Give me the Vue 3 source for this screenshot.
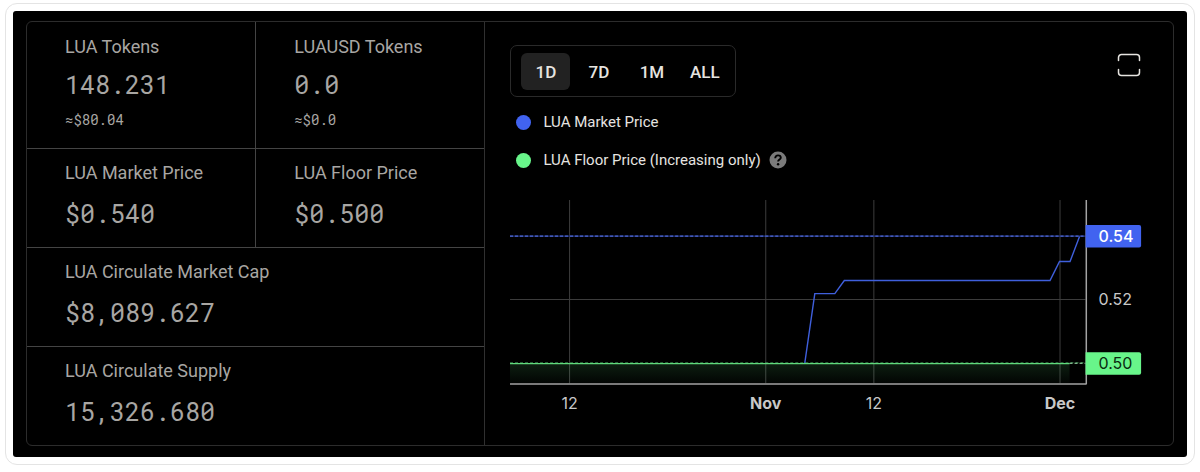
<script setup>
import { ref } from 'vue'

const stats = [
  { label: 'LUA Tokens', value: '148.231', note: '≈$80.04' },
  { label: 'LUAUSD Tokens', value: '0.0', note: '≈$0.0' },
  { label: 'LUA Market Price', value: '$0.540' },
  { label: 'LUA Floor Price', value: '$0.500' },
  { label: 'LUA Circulate Market Cap', value: '$8,089.627', wide: true },
  { label: 'LUA Circulate Supply', value: '15,326.680', wide: true },
]

const ranges = ['1D', '7D', '1M', 'ALL']
const activeRange = ref('1D')

const ticks = [
  { x: 59.5, label: '12' },
  { x: 255.5, label: 'Nov', bold: true },
  { x: 363.5, label: '12' },
  { x: 549.5, label: 'Dec', bold: true },
]
</script>

<template>
  <main class="frame">
    <div class="screen">
      <div class="panel">
        <dl class="stats">
          <div v-for="s in stats" :key="s.label" class="stat" :class="{ wide: s.wide, noted: s.note }">
            <dt>{{ s.label }}</dt>
            <dd class="value">{{ s.value }}</dd>
            <dd v-if="s.note" class="note">{{ s.note }}</dd>
          </div>
        </dl>

        <section class="market">
          <header class="toolbar">
            <div class="ranges" role="group" aria-label="Range">
              <button
                v-for="r in ranges"
                :key="r"
                type="button"
                :class="{ active: r === activeRange }"
                :aria-pressed="r === activeRange"
                @click="activeRange = r"
              >{{ r }}</button>
            </div>
            <button type="button" class="expand" aria-label="Full screen">
              <svg width="24" height="24" viewBox="0 0 24 24" fill="none" stroke="#e6e4e0" stroke-width="1.5" stroke-linecap="round">
                <path d="M1.5 7.5V4.5a3 3 0 0 1 3-3h15a3 3 0 0 1 3 3v3" />
                <path d="M1.5 16.5v3a3 3 0 0 0 3 3h15a3 3 0 0 0 3-3v-3" />
              </svg>
            </button>
          </header>

          <ul class="legend">
            <li><span class="dot blue"></span>LUA Market Price</li>
            <li>
              <span class="dot green"></span>LUA Floor Price (Increasing only)
              <button type="button" class="help" aria-label="About the floor price">
                <svg width="18" height="18" viewBox="0 0 18 18">
                  <circle cx="9" cy="9" r="8.5" fill="#7b7b7b" />
                  <path d="M6.2 7.2C6.2 5.400 7.400 4.400 9 4.400s2.800 .9 2.800 2.400c0 1.700-2.700 1.900-2.700 3.700" fill="none" stroke="#000" stroke-width="1.900" />
                  <circle cx="9.100" cy="13.200" r="1.200" fill="#000" />
                </svg>
              </button>
            </li>
          </ul>

          <svg class="chart" viewBox="0 0 630 220" role="img" aria-label="LUA price chart">
            <defs>
              <linearGradient id="floorFill" x1="0" y1="0" x2="0" y2="1">
                <stop offset="0" stop-color="#68f58a" stop-opacity="0.12" />
                <stop offset="1" stop-color="#68f58a" stop-opacity="0.02" />
              </linearGradient>
            </defs>
            <g stroke="#3c3c3c">
              <path v-for="t in ticks" :key="t.x" :d="`M${t.x} 0V183`" />
              <path d="M0 99.5H575" />
            </g>
            <rect x="0" y="164" width="559" height="19" fill="url(#floorFill)" />
            <path d="M0 36H575" stroke="#24357f" stroke-width="1.3" />
            <path d="M0 36H575" stroke="#4f6ad8" stroke-width="1.3" stroke-dasharray="3 2" />
            <path
              d="M294.5 163L304.5 93.5H324.5L334 80.5H539.5L549 61.5H559.5L569 36.5"
              fill="none" stroke="#3f5fdc" stroke-width="1.4"
            />
            <path d="M0 162.5H575" stroke="#68f58a" stroke-dasharray="3 2" opacity="0.5" />
            <path d="M0 163.5H559" stroke="#5fd97c" stroke-width="1.3" />
            <path d="M559 163H575" stroke="#a5e8b4" stroke-dasharray="3 2" />
            <path d="M0 183.75H576" stroke="#a3a3a3" stroke-width="1.5" />
            <path d="M575.75 0V184" stroke="#a3a3a3" stroke-width="1.5" />

            <path d="M575 25H628.500a2 2 0 0 1 2 2V45.500a2 2 0 0 1-2 2H575z" fill="#4163f0" />
            <path d="M575 152H628.500a2 2 0 0 1 2 2V172.500a2 2 0 0 1-2 2H575z" fill="#68f58a" />
            <g class="axis">
              <text x="588" y="42" class="on-blue">0.54</text>
              <text x="588" y="105">0.52</text>
              <text x="588" y="169" class="on-green">0.50</text>
              <text
                v-for="t in ticks" :key="t.x" :x="t.x" y="209"
                text-anchor="middle" :class="{ bold: t.bold }"
              >{{ t.label }}</text>
            </g>
          </svg>
        </section>
      </div>
    </div>
  </main>
</template>

<style>
body {
  background: #fff;
}
</style>

<style scoped>
.frame {
  margin: 3px 5px 6px;
  padding: 7px;
  border: 1px solid #e4e4e4;
  border-radius: 12px;
  font-family: Roboto, "Liberation Sans", sans-serif;
}
.screen {
  padding: 10px 13px 11px;
  border-radius: 3px;
  background: #000;
}
.panel {
  display: grid;
  grid-template-columns: 2fr 3fr;
  border: 1px solid #2c2c2c;
  border-radius: 6px;
}
.stats {
  display: grid;
  grid-template-columns: 1fr 1fr;
  gap: 1px;
  margin: 0;
  overflow: hidden;
  border-right: 1px solid #303030;
  border-radius: 5px 0 0 5px;
  background: #444;
}
.stat {
  display: flex;
  flex-direction: column;
  gap: 13px;
  padding: 12px 38px 17px;
  background: #000;
  color: #a8a6a3;
}
.stat.noted {
  gap: 10px;
  padding-top: 13px;
  padding-bottom: 19px;
}
.wide {
  grid-column: 1 / -1;
}
dt {
  font-size: 18px;
  line-height: 24px;
  white-space: nowrap;
}
dd {
  margin: 0;
  font-family: "Roboto Mono", "DejaVu Sans Mono", monospace;
}
.value {
  font-size: 25px;
  line-height: 32px;
}
.note {
  font-size: 14px;
  line-height: 18px;
}
.market {
  min-width: 0;
  padding: 23px 32px 24px 25px;
}
.toolbar {
  display: flex;
  align-items: flex-start;
  justify-content: space-between;
}
button {
  margin: 0;
  padding: 0;
  border: 0;
  background: none;
  color: inherit;
  font: inherit;
  cursor: pointer;
}
.ranges {
  display: flex;
  gap: 4px;
  padding: 7px 6px 6px 10px;
  border: 1px solid #2a2a2a;
  border-radius: 7px;
}
.ranges button {
  width: 49px;
  height: 37px;
  border-radius: 6px;
  color: #e6e4e0;
  font-size: 17px;
  font-weight: 500;
  line-height: 24px;
}
.ranges .active {
  background: #222;
}
.expand {
  display: flex;
  margin-top: 8px;
}
.legend {
  display: flex;
  flex-direction: column;
  gap: 14px;
  margin: 13px 0 28px;
  padding: 0 0 0 6px;
  list-style: none;
  color: #e6e4e0;
  font-size: 15px;
  line-height: 24px;
}
.legend li {
  display: flex;
  align-items: center;
}
.dot {
  width: 15px;
  height: 15px;
  margin-right: 12px;
  border-radius: 50%;
}
.blue {
  background: #4163f0;
}
.green {
  background: #68f58a;
}
.help {
  display: flex;
  margin-left: 8px;
}
.chart {
  display: block;
  width: 100%;
  height: auto;
  overflow: visible;
}
.axis {
  font-family: Inter, Roboto, sans-serif;
  font-size: 16px;
  fill: #c8c8c8;
}
.on-blue {
  fill: #fff;
  font-weight: 500;
}
.on-green {
  fill: #0a2a10;
}
.bold {
  font-weight: 700;
}
</style>
